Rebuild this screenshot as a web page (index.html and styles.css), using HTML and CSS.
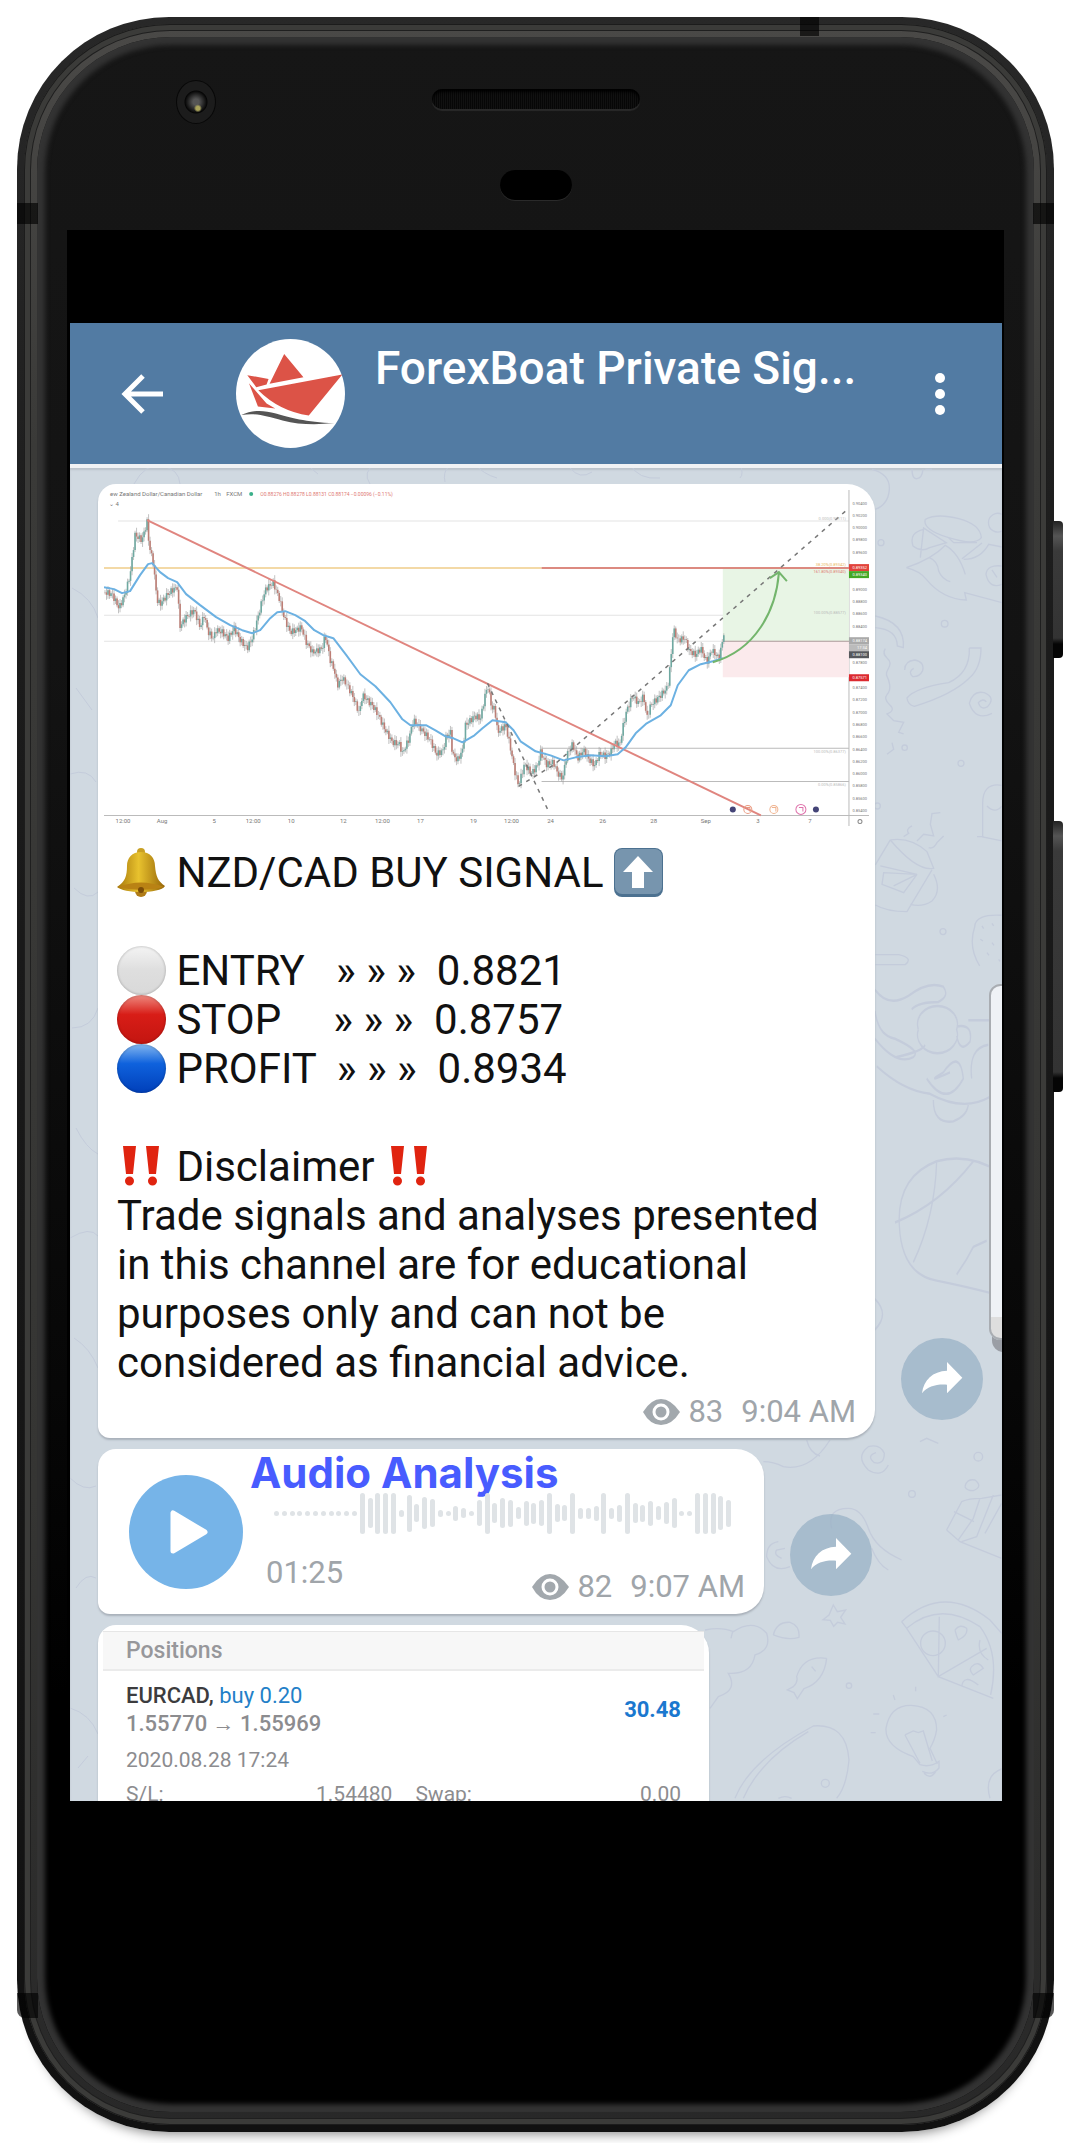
FILE: index.html
```html
<!DOCTYPE html>
<html lang="en">
<head>
    <meta charset="UTF-8">
    <meta name="viewport" content="width=device-width, initial-scale=1.0">
    <title>ForexBoat Private Signals</title>
    <link rel="stylesheet" href="styles.css">
</head>
<body>
    <div class="phone">
        <span class="side-button power"></span>
        <span class="side-button volume"></span>
        <div class="rail">
            <div class="face">
                <div class="bezel">
                    <span class="camera"></span>
                    <span class="speaker"></span>
                    <span class="sensor"></span>
                </div>

                <div class="screen">
                    <header class="header">
                        <button class="icon-btn" aria-label="Back">
                            <svg class="back-icon" viewBox="0 0 42 40"><path d="M22 2 4 20l18 18M4 20h38" fill="none" stroke="#fff" stroke-width="5"/></svg>
                        </button>
                        <svg class="avatar" viewBox="30 23 328 328">
                            <circle cx="194" cy="187" r="164" fill="#fff"/>
                            <path d="M175 68 233 138 131 158ZM64 132l64 11-6 17-31 8ZM97 177 350 130 249 253Q160 240 97 177ZM69 156 122 217 148 232 96 226Z" fill="#dc5347"/>
                            <path d="M46 252C80 236 110 236 150 247S240 274 326 276C270 282 220 281 170 268S90 244 46 252Z" fill="#555"/>
                        </svg>
                        <h1 class="channel-name">ForexBoat Private Sig...</h1>
                        <button class="icon-btn menu" aria-label="Menu">
                            <svg class="menu-icon" viewBox="0 0 12 44"><g fill="#fff"><circle cx="6" cy="6" r="5"/><circle cx="6" cy="22" r="5"/><circle cx="6" cy="38" r="5"/></g></svg>
                        </button>
                    </header>

                    <main class="chat">
                        <svg class="wallpaper" viewBox="70 468 932 1333" preserveAspectRatio="xMaxYMin slice" aria-hidden="true">
                            <g fill="none" stroke="#c4ccdb" stroke-width="4">
                                <g transform="translate(872 466) scale(.3333)">
                                    <path d="M0 10Q55 25 52 70T10 130M120 10q0 30 15 28t18-28M180 10h-20M160 160Q150 190 230 215T328 215Q325 175 260 158T160 160M155 185l-10 90M155 190q-45 10-32 50 25 20 50 5l50-15-70-45M230 215l15 15h70M390 145a28 28 0 1 0 0 50"/>
                                    <path d="M103 305Q180 280 220 238 260 260 280 325M103 305q40 10 60 35 50 60 120 62l-5-22 112 30M172 275q25 10 28 40 10 25 35 32M275 280q50 0 75-45l40 8M270 278l60-47M390 300q-45-5-48 25 10 45 48 30M360 312l15 22"/>
                                    <circle cx="27" cy="230" r="9"/><circle cx="218" cy="473" r="10"/><circle cx="98" cy="845" r="8"/><circle cx="267" cy="892" r="9"/><circle cx="213" cy="1397" r="9"/><circle cx="16" cy="1020" r="9"/>
                                    <path d="M10 450q90 20 84 95l-18-5Q75 490 10 485M40 548q-10 15 5 28t5 30-5 25 8 25-8 30 8 30-8 28l20 20 30 5-15 30 15 5M292 546h35q0 60-35 90-50 50-165 85-20-5-22-25Q130 665 230 650q65-30 62-104"/>
                                    <path d="M98 612q0-27 30-30 30 5 24 32-10 20-30 18-15-15 3-25M360 742q-50 25-68-30 10-40 45-32 35 15 10 42-20 12-28-12 15-15 24-2M45 865l20-15-5-20M390 958q-60-10-58 60v95l58 12M315 1112h20M345 1020q25 25 45 0"/>
                                    <path d="M55 1122l-45 75M55 1122q60-10 110 35l20 50q-50 10-130-85M180 1212l-75 125q-60 0-95-20M25 1200l110 25-100-5-5 35 40 15 25 10 40-55-70 35M185 1225q25 50-5 80-30 20-65 10M120 1080q-20 10-10 22l-15 10M135 1125l20-20 30 5-10-35 5-32 25-3M170 1145q15 5 25-15l20-20M390 1348q-80-5-82 35-20 60 15 117M330 1380l5 8M360 1372l5 8M325 1420l8 5M360 1430l6 8M345 1460l6 8M380 1480l4 6M10 1466h70q45 10 20 30H10"/>
                                </g>
                                <g transform="translate(860 460) scale(.3333 .6124)">
                                    <path d="M45 865q40 30 100 10 60-25 105-15 20 15-15 25-60 0-80 12M45 900q10 40 60 45 80 20 55 30-50 15-115-30M175 930a60 30 0 1 0 115 0 60 30 0 1 0-115 0M290 925q50-5 40 25-30 20-40-10M110 975q80-10 85-20M50 990q80 40 160 45 100 30 180 5M200 1010q60 50 110 0-10-50-60-10-60 20 20 0M220 1045q0 40 60 35 45-10 45-30M335 1010q-10-50 50-55M325 915h62"/>
                                    <path d="M426 1165Q330 1130 230 1145 110 1170 118 1250 125 1330 230 1340 320 1350 390 1360M230 1145q-5 90-70 165M340 1145q-100 70-235 100M290 1330l30-25 20-20 40-10M45 1370q45 25 0 50"/>
                                </g>
                                <g transform="translate(700 1440) scale(.3333)">
                                    <path d="M190 65q30 0 60 15 80 15 140-80M320 0q10 40 40 48M565 75q-20 40-60 15-40-40 0-70 35-10 48 20 0 35-30 28-25-20 5-30M270 380q-50 20-70-30 0-40 35-45M245 355q-25-10-15-25l25-5M395 265q-15-60 50-60 40 0 60 60 20 60 100 95M515 325q20 50 50 65"/>
                                    <circle cx="835" cy="50" r="13"/><circle cx="636" cy="162" r="10"/><circle cx="447" cy="737" r="8"/><circle cx="376" cy="1030" r="12"/><path d="M660 5l20-10 35 15M795 140q5-25 30-20 25 20-5 32-20 0-25-12M740 270l45-85q20-10 60-10l60-10M740 270l40 35 125 50M762 215l60 30M840 175l-20 60-45 65M880 165l-50 125-45 15M905 190l-50 90"/>
                                    <path d="M400 495l12 20 25-5-15 22 13 20-22-5-12 12-10-18-22-2 18-14ZM220 585q10-40 50-38 30 10 27 45-35 10-77-7M15 570q50-10 85 5 60-40 100 5 15 50-35 65-10 60-80 55 30 50-30 70l-25 35M98 575l-5 20M380 655q-70-10-90 55 5 15-10 30l-18 10 20 8 10 18 20-30q60-20 68-91M335 680l12 14"/>
                                    <path d="M605 545Q730 430 870 540M605 545l15 20Q720 480 840 560M620 565l95 145 165 65M840 560q60 80 32 205M870 540l35 40M718 530l-3 180 145-85M662 610a37 37 0 1 0 74 0 37 37 0 1 0-74 0M765 570q15-20 35-5 5 20-25 35-5-10-10-30M840 600q-10 40 25 60M815 680q20-20 35 5l-30 20q-15-15-5-25M785 740q5-40 50-5"/>
                                    <path d="M640 950Q555 920 558 865 570 795 634 796 710 800 710 870 705 900 690 925L712 972M615 885l45 85M615 885l25-12 15 5 15-5 27 90M640 950l20 24q30 10 57-10v20q-20 25-50 10M672 1000q20 20 35-5M520 822h18M512 878h15M580 765l5 15M647 740v14M730 830l10-5M105 1075Q150 960 340 858 440 850 447 960 440 1040 410 1075M130 1075Q180 960 325 875M910 985q-60 20-40 90M235 1075q20-10 40 0"/>
                                </g>
                                <g transform="translate(70 468)" stroke-width="1">
                                    <path d="M64 16Q75-5 92-2T110 16M238-4q4 6 10 10M300 16q-8-12 5-20M375 14q-4-20 20-18M405-4q8 10 22 14M500 0q10 12 22 4M560-4q8 16 30 14M670-4q4 10 0 14M2 120q20 10 26 30M6 220l16 22M0 306q18-6 26 8M4 420q14 14 24 4M2 560q20 0 26-20M6 660q10 20 22 26M0 770q20-12 28-2M4 870q16 10 24 30M0 1010q14 14 26 8M6 1120q10-16 20-10M0 1240q20 6 28 26M8 1300l10-12"/>
                                </g>
                            </g>
                        </svg>

                        <article class="message">
                            <div class="bubble signal">
                                <svg class="chart" id="chart" viewBox="14 16 764 340" role="img" aria-label="NZD/CAD chart">
                                    <g fill="none" stroke="#ddd">
                                        <path d="M28 51H758M14 145H758M14 171H632" stroke="#e4e4e4"/>
                                        <path d="M451 278H758M451 311H758" stroke="#bbb"/>
                                        <path d="M758 20V370M14 345H779" stroke="#bbb"/>
                                    </g>
                                    <path d="M632 99H758V171H632Z" fill="#e8f5e5"/>
                                    <path d="M632 171H758V207H632Z" fill="#fbeaec"/>
                                    <path d="M632 171H758" stroke="#a99"/>
                                    <path d="M14 98H451" stroke="#f3d9a6" stroke-width="2"/>
                                    <path d="M451 98H758" stroke="#dc8a80" stroke-width="2"/>
                                    <g id="candles"></g>
                                    <path d="M57 50 670 345" stroke="#e0857f" stroke-width="2"/>
                                    <polyline id="average" fill="none" stroke="#6cb1e2" stroke-width="2" stroke-linejoin="round"/>
                                    <path d="M397 213 459 343M428 316 464 294 757 39" fill="none" stroke="#777" stroke-width="1.5" stroke-dasharray="4 5"/>
                                    <path d="M622 192C665 180 685 140 688 103M679 108l9-6 8 9" fill="none" stroke="#73b56c" stroke-width="2"/>
                                    <g class="chart-text">
                                        <text x="20" y="26">ew Zealand Dollar/Canadian Dollar</text>
                                        <text x="124" y="26">1h</text>
                                        <text x="136" y="26">FXCM</text>
                                        <circle cx="161" cy="24" r="2" fill="#3bb08a"/>
                                        <text class="loss ohlc" x="170" y="26">O0.88276 H0.88278 L0.88131 C0.88174 −0.00096 (−0.11%)</text>
                                        <text x="19" y="36">⌄ 4</text>
                                    </g>
                                    <g class="chart-text faint" text-anchor="end">
                                        <text x="755" y="50">0.000(0.90111)</text>
                                        <text class="gold" x="755" y="96">38.20%(0.89342)</text>
                                        <text class="loss" x="755" y="103">161.80%(0.89340)</text>
                                        <text x="755" y="144">100.00%(0.88577)</text>
                                        <text x="755" y="283">100.00%(0.86377)</text>
                                        <text x="755" y="316">0.00%(0.85866)</text>
                                    </g>
                                    <g class="chart-text price-label" id="prices" text-anchor="end"></g>
                                    <g class="chart-text" id="dates" text-anchor="middle"></g>
                                    <g>
                                        <circle cx="642" cy="339" r="3" fill="#447"/><circle cx="725" cy="339" r="3" fill="#447"/>
                                        <g fill="none"><circle cx="657" cy="339" r="4" stroke="#e99a80"/><path d="M655 337h4v4" stroke="#e99a80"/><circle cx="683" cy="339" r="4" stroke="#efb28e"/><path d="M681 337h4v4" stroke="#efb28e"/><circle cx="710" cy="339" r="5" stroke="#df72ab"/><path d="M708 337h4v4" stroke="#df72ab"/><circle cx="769" cy="351" r="2" stroke="#888"/></g>
                                    </g>
                                </svg>

                                <p class="text"><svg class="emoji" viewBox="0 0 49 49"><defs><linearGradient id="gold"><stop offset="0" stop-color="#a5760b"/><stop offset=".45" stop-color="#e8c22e"/><stop offset="1" stop-color="#966508"/></linearGradient></defs><circle cx="24" cy="43" r="6" fill="#b07c18"/><circle cx="24" cy="4" r="4" fill="#c8a024"/><path d="M24 4C33 4 38 10 38 18 39 29 41 33 48 38 46 42 34 44 24 44S3 42 0 39C8 34 10 28 10 18 10 10 15 4 24 4Z" fill="url(#gold)"/><path d="M1 39q23-9 46 0-23 6-46 0" fill="#b98214"/><circle cx="24" cy="42" r="3" fill="#7c4d08"/></svg> NZD/CAD BUY SIGNAL <svg class="emoji" viewBox="0 0 49 49"><rect x="0" y="0" width="49" height="49" rx="8" fill="#4c7190"/><rect x="1" y="1" width="47" height="45" rx="7" fill="#7795ae"/><path d="M24 8 39 24H30V40H18V24H9Z" fill="#fff"/></svg>

<span class="dot white"></span> ENTRY   » » »  0.8821
<span class="dot red"></span> STOP     » » »  0.8757
<span class="dot blue"></span> PROFIT  » » »  0.8934

<svg class="emoji" viewBox="0 0 49 49"><path id="bangs" d="M6 4H19L16 32H9ZM29 4H42L39 32H32ZM8 39a4 4 0 1 0 9 0 4 4 0 1 0-9 0M31 39a4 4 0 1 0 9 0 4 4 0 1 0-9 0" fill="#e02410"/></svg> Disclaimer <svg class="emoji" viewBox="0 0 49 49"><use href="#bangs"/></svg>
Trade signals and analyses presented in this channel are for educational purposes only and can not be considered as financial advice.</p>
                                <div class="meta">
                                    <svg class="eye" viewBox="0 0 37 26"><path d="M0 13Q8 0 18 0T37 13Q29 26 18 26T0 13Z" fill="#a2a8ad"/><circle cx="18" cy="13" r="7" fill="none" stroke="#fff" stroke-width="3"/></svg>
                                    <span>83</span>
                                    <time>9:04 AM</time>
                                </div>
                            </div>
                            <button class="share" aria-label="Share">
                                <svg viewBox="270 220 246 246"><path d="M333 386C338 345 365 320 408 318V292L454 339 408 386V360C375 358 350 365 333 386Z" fill="#fff"/></svg>
                            </button>
                        </article>

                        <article class="message">
                            <div class="bubble audio">
                                <button class="play" aria-label="Play">
                                    <svg viewBox="0 0 114 114"><path d="M44 38V76L76 57Z" fill="#fff" stroke="#fff" stroke-width="5" stroke-linejoin="round"/></svg>
                                </button>
                                <div class="track">
                                    <h2 class="audio-title">Audio Analysis</h2>
                                    <div class="wave" id="wave"></div>
                                    <div class="track-info">
                                        <time class="duration">01:25</time>
                                        <div class="meta">
                                            <svg class="eye" viewBox="0 0 37 26"><path d="M0 13Q8 0 18 0T37 13Q29 26 18 26T0 13Z" fill="#a2a8ad"/><circle cx="18" cy="13" r="7" fill="none" stroke="#fff" stroke-width="3"/></svg>
                                            <span>82</span>
                                            <time>9:07 AM</time>
                                        </div>
                                    </div>
                                </div>
                            </div>
                            <button class="share" aria-label="Share">
                                <svg viewBox="270 220 246 246"><path d="M333 386C338 345 365 320 408 318V292L454 339 408 386V360C375 358 350 365 333 386Z" fill="#fff"/></svg>
                            </button>
                        </article>

                        <article class="message">
                            <div class="bubble positions">
                                <h3 class="positions-title">Positions</h3>
                                <div class="position">
                                    <div class="deal">
                                        <div>
                                            <p class="pair">EURCAD, <span class="buy">buy 0.20</span></p>
                                            <p class="prices">1.55770 → 1.55969</p>
                                        </div>
                                        <strong class="profit">30.48</strong>
                                    </div>
                                    <p class="date">2020.08.28 17:24</p>
                                    <dl class="details">
                                        <dt>S/L:</dt><dd>1.54480</dd>
                                        <dt>Swap:</dt><dd>0.00</dd>
                                    </dl>
                                </div>
                            </div>
                        </article>

                        <span class="edge-panel"></span>
                    </main>
                </div>
            </div>
        </div>
        <span class="antenna top"></span>
        <span class="antenna upper"></span>
        <span class="antenna lower"></span>
    </div>

    <script src="script.js"></script>
</body>
</html>
```
FILE: styles.css
```css
* {
    box-sizing: border-box;
}

body {
    margin: 0;
    padding: 17px 16px 11px 17px;
    background-color: #fff;
    font-family: Roboto, "Liberation Sans", sans-serif;
    overflow-x: hidden;
}

h1, h2, h3, p, dl, dd {
    margin: 0;
}

button {
    padding: 0;
    border: none;
    background: none;
    cursor: pointer;
}

svg {
    display: block;
}

/* phone body */
.phone {
    position: relative;
    padding: 7px;
    border-radius: 152px;
    background: linear-gradient(#282828, #1b1b1b 30%, #111);
    box-shadow: 0 14px 12px -12px #888;
}

.rail {
    padding: 13px;
    border-radius: 146px;
    background: linear-gradient(#4a4947, #3a3a38 20%, #353533 70%, #282828);
    box-shadow: inset 0 0 0 1px #1c1c1c, inset 0 0 0 6px #3b3b39, inset 0 0 0 7px #1f1f1f;
}

.face {
    padding: 0 30px 311px;
    border-radius: 134px;
    background: linear-gradient(#161616, #131313 30%, #070707 65%, #000 80%);
    box-shadow: inset 0 0 5px 8px #333;
}

.bezel {
    display: grid;
    grid-template-columns: 1fr 208px 1fr;
    align-content: start;
    align-items: start;
    height: 193px;
    padding-top: 43px;
    row-gap: 46px;
}

.camera {
    width: 40px;
    height: 44px;
    margin-left: 109px;
    border-radius: 50%;
    border: 1px solid #080808;
    background: radial-gradient(circle at 55% 65%, #a9a35b 0 2px, transparent 4px), radial-gradient(circle, #555 0 3px, #050505 11px, #1c1c1c 12px);
}

.speaker {
    height: 20px;
    margin-top: 9px;
    border-radius: 10px;
    background: repeating-linear-gradient(90deg, #070707 0 1px, #111 1px 2px);
    box-shadow: 0 2px 1px #2a2a2a, inset 0 3px 3px #000;
}

.sensor {
    grid-column: 2;
    justify-self: center;
    width: 72px;
    height: 30px;
    border-radius: 15px;
    background-color: #000;
    box-shadow: 0 1px 0 #2a2a2a;
}

.side-button {
    position: absolute;
    right: -9px;
    width: 10px;
    border-radius: 0 4px 4px 0;
    background: linear-gradient(#222, #555 15px, #3a3a3a 30px, #333 calc(100% - 20px), #050505 calc(100% - 14px));
}

.power {
    top: 504px;
    height: 137px;
}

.volume {
    top: 804px;
    height: 271px;
}

.antenna {
    position: absolute;
    background-color: rgba(0, 0, 0, 0.65);
}

.antenna.top {
    top: 0;
    right: 235px;
    width: 19px;
    height: 19px;
}

.antenna.upper, .antenna.lower {
    left: 0;
    right: 0;
    height: 21px;
    background: linear-gradient(90deg, rgba(0, 0, 0, 0.65) 21px, transparent 21px calc(100% - 21px), rgba(0, 0, 0, 0.65) calc(100% - 21px));
}

.antenna.upper {
    top: 186px;
}

.antenna.lower {
    bottom: 114px;
    height: 25px;
    border-radius: 0 0 8px 8px;
}

/* screen */
.screen {
    padding: 93px 2px 0 3px;
    background-color: #000;
}

.header {
    display: flex;
    align-items: center;
    height: 145px;
    padding: 0 56px 0 51px;
    background-color: #527ba3;
    border-bottom: 4px solid #f1f2f4;
}

.back-icon {
    width: 42px;
    height: 40px;
}

.avatar {
    width: 109px;
    height: 109px;
    margin-left: 73px;
}

.channel-name {
    flex: 1;
    align-self: flex-start;
    margin: 15px 0 0 30px;
    color: #fff;
    font-size: 46px;
    font-weight: 500;
    line-height: 60px;
    white-space: nowrap;
}

.menu-icon {
    width: 12px;
    height: 44px;
}

.chat {
    position: relative;
    display: flex;
    flex-direction: column;
    gap: 11px;
    aspect-ratio: 932 / 1333;
    padding: 16px 18px 0 28px;
    background-color: #d0d9e1;
    box-shadow: inset 0 2px 2px #bcc3cb;
    overflow: hidden;
}

.wallpaper {
    position: absolute;
    inset: 0;
    width: 100%;
    height: 100%;
}

.edge-panel {
    position: absolute;
    top: 516px;
    right: -10px;
    width: 23px;
    height: 356px;
    border: 2px solid #a9adb2;
    border-radius: 12px;
    background: linear-gradient(#eff2f6 94%, #dedede 94%);
    box-shadow: 3px 12px 0 #9a9ea5;
}

.message {
    position: relative;
    display: flex;
    flex-shrink: 0;
    align-items: flex-end;
    gap: 26px;
}

.bubble {
    border-radius: 18px 28px 28px 12px;
    background-color: #fff;
    box-shadow: 0 2px 2px #a9b1ba;
}

.share {
    flex-shrink: 0;
    width: 82px;
    height: 82px;
    margin-bottom: 18px;
    border-radius: 50%;
    background-color: rgba(154, 177, 197, 0.75);
}

.meta {
    display: flex;
    align-items: center;
    justify-content: flex-end;
    color: #a0a5aa;
    font-size: 31px;
    line-height: 36px;
}

.eye {
    width: 37px;
    height: 26px;
    margin-right: 8px;
}

.meta time {
    margin-left: 18px;
}

/* signal message */
.signal {
    width: 777px;
    padding: 2px 6px 8px;
}

.chart {
    width: 100%;
}

.chart-text {
    fill: #777;
    font-size: 6px;
}

.ohlc {
    font-size: 5px;
}

.faint {
    fill: #bbb;
    font-size: 4px;
}

.price-label {
    font-size: 4px;
}

.loss {
    fill: #e07a74;
}

.gold {
    fill: #eab55c;
}

.tag {
    fill: #fff;
}

.text {
    margin: 22px 13px 0;
    color: #111;
    font-size: 42px;
    line-height: 49px;
    white-space: pre-wrap;
}

.emoji, .dot {
    display: inline-block;
    width: 49px;
    height: 49px;
    vertical-align: top;
}

.dot {
    border-radius: 50%;
    box-shadow: inset 0 0 2px 1px rgba(0, 0, 0, 0.15);
}

.white {
    background: linear-gradient(#f4f4f4, #dedede 50%, #d9d9d9);
}

.red {
    background: linear-gradient(#ee8a80, #d81d17 40%, #c31510);
}

.blue {
    background: linear-gradient(#84b7ef, #0f62dd 40%, #003fb9);
}

.signal .meta {
    margin: 7px 13px 0;
}

/* audio message */
.audio {
    display: flex;
    align-items: center;
    width: 666px;
    height: 165px;
    padding: 0 19px 0 31px;
}

.play {
    flex-shrink: 0;
    width: 114px;
    height: 114px;
    border-radius: 50%;
    background-color: #76b4e8;
}

.track {
    flex: 1;
    align-self: flex-start;
    padding: 5px 0 0 7px;
}

.audio-title {
    color: #485cff;
    font-family: Inter, "Liberation Sans", sans-serif;
    font-size: 42px;
    font-weight: 700;
    line-height: 38px;
}

.wave {
    display: flex;
    align-items: center;
    justify-content: space-between;
    height: 42px;
    margin: 0 13px 0 24px;
}

.wave span {
    width: 5px;
    border-radius: 3px;
    background-color: #dfe3e6;
}

.track-info {
    display: flex;
    align-items: flex-end;
    justify-content: space-between;
    padding-left: 16px;
}

.duration {
    margin-bottom: 14px;
    color: #a0a5aa;
    font-size: 31px;
    line-height: 36px;
}

.track-info .meta {
    margin-top: 35px;
}

/* positions message */
.positions {
    width: 611px;
    padding: 6px 5px 20px;
}

.positions-title {
    padding: 0 23px;
    background-color: #f7f7f7;
    border-top: 1px solid #e6e6e6;
    border-bottom: 2px solid #ebebeb;
    color: #97979b;
    font-size: 23px;
    font-weight: 500;
    line-height: 37px;
}

.position {
    padding: 11px 23px 0;
    color: #8c8c8f;
    font-size: 21px;
    line-height: 28px;
}

.deal {
    display: flex;
    align-items: center;
    justify-content: space-between;
}

.pair {
    color: #3c3c3e;
    font-size: 22px;
    font-weight: 500;
}

.buy {
    color: #2380c8;
    font-weight: 400;
}

.prices {
    font-size: 22px;
    font-weight: 500;
}

.profit {
    color: #1b78cf;
    font-size: 22px;
    font-weight: 700;
}

.date {
    margin-top: 8px;
}

.details {
    display: grid;
    grid-template-columns: 12fr 12fr 13fr 13fr;
    margin-top: 6px;
}

.details dt:nth-of-type(2) {
    padding-left: 23px;
}

.details dd {
    text-align: right;
}
```
FILE: script.js
```js
var NS = 'http://www.w3.org/2000/svg';

// turning points of the price and of the moving average, in chart units
var price = [[14,122],[22,124],[29,138],[35,124],[40,105],[45,65],[52,70],[57,52],[59,75],[63,92],[67,130],[70,134],[76,126],[82,120],[87,117],[90,156],[96,147],[104,140],[110,157],[114,145],[118,162],[123,168],[126,160],[132,162],[138,168],[144,158],[150,170],[157,178],[162,168],[167,150],[172,130],[176,118],[183,113],[189,128],[194,148],[200,162],[206,160],[211,157],[216,172],[222,182],[228,180],[232,178],[235,165],[240,190],[244,200],[247,215],[252,208],[257,215],[262,225],[269,243],[272,225],[282,235],[288,245],[294,258],[302,272],[309,274],[312,283],[318,270],[323,250],[330,258],[340,270],[346,284],[353,280],[355,268],[360,262],[362,284],[367,290],[372,280],[375,255],[384,246],[390,248],[394,228],[397,215],[402,240],[404,236],[407,262],[415,255],[420,278],[424,300],[428,315],[434,294],[441,303],[447,295],[450,282],[456,294],[463,292],[467,303],[472,308],[476,285],[482,274],[487,288],[493,280],[499,290],[504,295],[509,283],[515,286],[520,282],[524,272],[529,275],[532,258],[536,240],[542,226],[548,233],[553,226],[556,248],[560,235],[570,225],[577,217],[580,190],[582,165],[583,160],[587,170],[594,168],[598,180],[605,185],[610,178],[616,192],[621,180],[628,188],[631,175],[633,163]];
var average = [[14,117],[24,119],[32,123],[40,121],[50,105],[58,94],[62,93],[70,102],[78,108],[87,112],[96,124],[110,135],[126,147],[140,155],[152,160],[162,163],[170,160],[180,148],[187,142],[195,141],[205,145],[215,151],[224,160],[233,165],[243,168],[256,185],[270,204],[285,216],[300,232],[312,249],[320,255],[336,255],[345,260],[355,266],[363,268],[372,272],[384,265],[392,258],[402,250],[415,252],[423,260],[430,271],[445,281],[460,285],[473,290],[485,287],[500,285],[515,286],[527,284],[535,277],[545,263],[556,253],[570,245],[580,235],[587,215],[598,200],[610,194],[622,191],[632,188]];

function priceAt(x) {
    for (var i = 1; i < price.length; i++) {
        if (x <= price[i][0]) {
            var a = price[i - 1];
            var b = price[i];
            return a[1] + (b[1] - a[1]) * (x - a[0]) / (b[0] - a[0]);
        }
    }
    return price[price.length - 1][1];
}

function add(parent, name, attrs, text) {
    var el = document.createElementNS(NS, name);
    for (var key in attrs) {
        el.setAttribute(key, attrs[key]);
    }
    if (text) {
        el.textContent = text;
    }
    document.getElementById(parent).appendChild(el);
}

// candles
var last = priceAt(14);
for (var x = 15, n = 0; x < 634; x += 1.5, n++) {
    var next = priceAt(x) + Math.sin(n * 2.4) * 3;
    var color = next < last ? '#6fa9a1' : '#bd7e75';
    var wick = 2 + (n * 7) % 4;
    add('candles', 'path', {
        d: 'M' + x + ' ' + (Math.min(last, next) - wick) + 'V' + (Math.max(last, next) + wick),
        stroke: '#999', 'stroke-width': 0.6
    });
    add('candles', 'path', { d: 'M' + x + ' ' + last + 'V' + next, stroke: color, 'stroke-width': 1.6 });
    last = next;
}
document.getElementById('average').setAttribute('points', average.join(' '));

// price axis
for (var i = 0; i < 26; i++) {
    if ([5, 6, 11, 12, 14].indexOf(i) === -1) {
        add('prices', 'text', { x: 776, y: Math.round(34.5 + i * 12.3) }, (0.904 - i * 0.002).toFixed(5));
    }
}
var tags = [[94, '#e2433b', '0.89352'], [101, '#43a825', '0.89340'], [167, '#aaa', '0.88174'], [174, '#bbb', '17:34'], [181, '#55585c', '0.88100'], [204, '#dc2a30', '0.87571']];
tags.forEach(function (tag) {
    add('prices', 'rect', { x: 758, y: tag[0], width: 21, height: 7, fill: tag[1] });
    add('prices', 'text', { x: 776, y: tag[0] + 5, 'class': 'tag' }, tag[2]);
});

// date axis
var dates = [[33, '12:00'], [72, 'Aug'], [124, '5'], [163, '12:00'], [201, '10'], [253, '12'], [292, '12:00'], [330, '17'], [383, '19'], [421, '12:00'], [460, '24'], [512, '26'], [563, '28'], [615, 'Sep'], [667, '3'], [719, '7']];
dates.forEach(function (date) {
    add('dates', 'text', { x: date[0], y: 353 }, date[1]);
});

// voice waveform
var bars = [5,5,5,5,5,5,5,5,5,5,5,41,30,41,41,41,7,37,18,32,28,7,5,15,10,5,26,41,20,30,27,12,25,21,26,41,18,16,41,11,11,15,41,11,17,41,20,17,25,14,22,30,5,5,41,41,41,34,27];
bars.forEach(function (height) {
    var bar = document.createElement('span');
    bar.style.height = height + 'px';
    document.getElementById('wave').appendChild(bar);
});
```
